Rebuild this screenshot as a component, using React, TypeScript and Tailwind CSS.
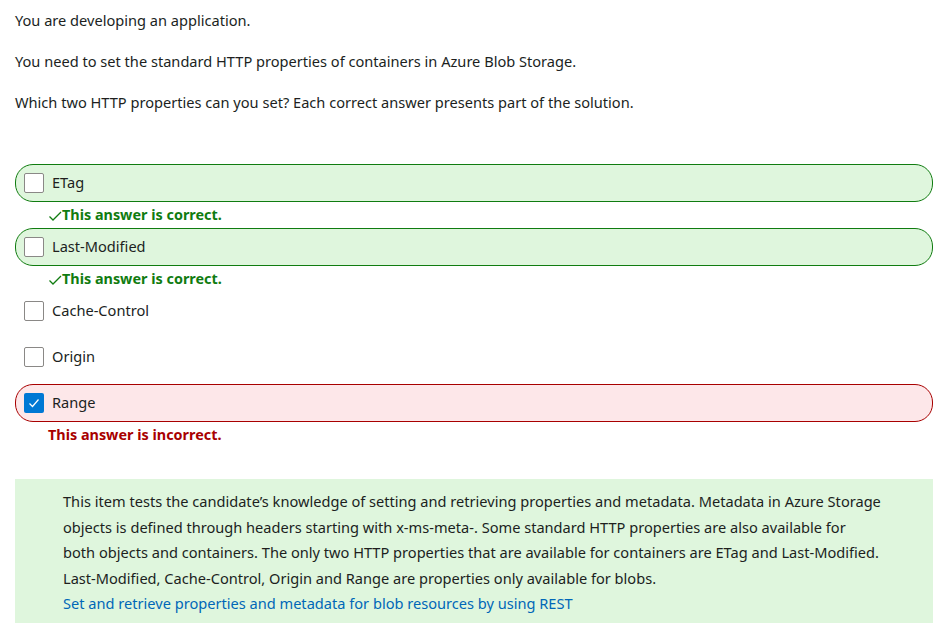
import React from "react";

const font = { fontFamily: '"Segoe UI", "Noto Sans", "Open Sans", sans-serif' };

function Box({ checked }: { checked?: boolean }) {
  if (checked) {
    return (
      <span className="w-[20px] h-[20px] rounded-[2px] bg-[#0078d4] flex items-center justify-center shrink-0">
        <svg width="14" height="14" viewBox="0 0 14 14" fill="none">
          <path d="M2.5 7.5 L5.5 10.5 L11.5 3.5" stroke="#ffffff" strokeWidth="1.2" />
        </svg>
      </span>
    );
  }
  return <span className="w-[20px] h-[20px] rounded-[2px] border border-[#8a8886] bg-white shrink-0" />;
}

function Option({ label, state, checked }: { label: string; state?: "ok" | "bad"; checked?: boolean }) {
  const cls =
    state === "ok"
      ? "border border-[#107c10] bg-[#dff6dd]"
      : state === "bad"
      ? "border border-[#a80000] bg-[#fde7e9]"
      : "border border-transparent";
  return (
    <div className={`h-[38px] rounded-[18px] flex items-center pl-[8px] gap-[8px] ${cls}`}>
      <Box checked={checked} />
      <span className="text-[14.6px] text-[#201f1e]">{label}</span>
    </div>
  );
}

function Correct() {
  return (
    <div className="h-[26px] pl-[33px] flex items-center text-[14.4px] font-bold text-[#107c10]">
      <svg width="14" height="14" viewBox="0 0 14 14" fill="none" className="mt-[2px]">
        <path d="M1.5 7.5 L5 11 L13 3" stroke="#107c10" strokeWidth="1.3" />
      </svg>
      <span>This answer is correct.</span>
    </div>
  );
}

export default function App() {
  return (
    <div className="bg-white w-[943px] h-[636px] pl-[15px] pr-[10px] text-[#201f1e]" style={font}>
      <div className="text-[14.6px] leading-[20px] pt-[10px]">
        <p>You are developing an application.</p>
        <p className="mt-[21px]">You need to set the standard HTTP properties of containers in Azure Blob Storage.</p>
        <p className="mt-[21px]">Which two HTTP properties can you set? Each correct answer presents part of the solution.</p>
      </div>
      <div className="mt-[52px] flex flex-col">
        <Option label="ETag" state="ok" />
        <Correct />
        <Option label="Last-Modified" state="ok" />
        <Correct />
        <Option label="Cache-Control" />
        <div className="mt-[8px]">
          <Option label="Origin" />
        </div>
        <div className="mt-[8px]">
          <Option label="Range" state="bad" checked />
        </div>
        <div className="h-[26px] pl-[33px] flex items-center text-[14.4px] font-bold text-[#a80000]">
          This answer is incorrect.
        </div>
      </div>
      <div className="mt-[31px] bg-[#dff6dd] h-[144px] pl-[48px] pt-[10px] text-[14.6px] leading-[25.5px] text-[#201f1e]">
        <p>
          This item tests the candidate’s knowledge of setting and retrieving properties and metadata. Metadata in Azure Storage
          <br />
          objects is defined through headers starting with x-ms-meta-. Some standard HTTP properties are also available for
          <br />
          both objects and containers. The only two HTTP properties that are available for containers are ETag and Last-Modified.
          <br />
          Last-Modified, Cache-Control, Origin and Range are properties only available for blobs.
        </p>
        <a className="text-[#0067b8]">Set and retrieve properties and metadata for blob resources by using REST</a>
      </div>
    </div>
  );
}
